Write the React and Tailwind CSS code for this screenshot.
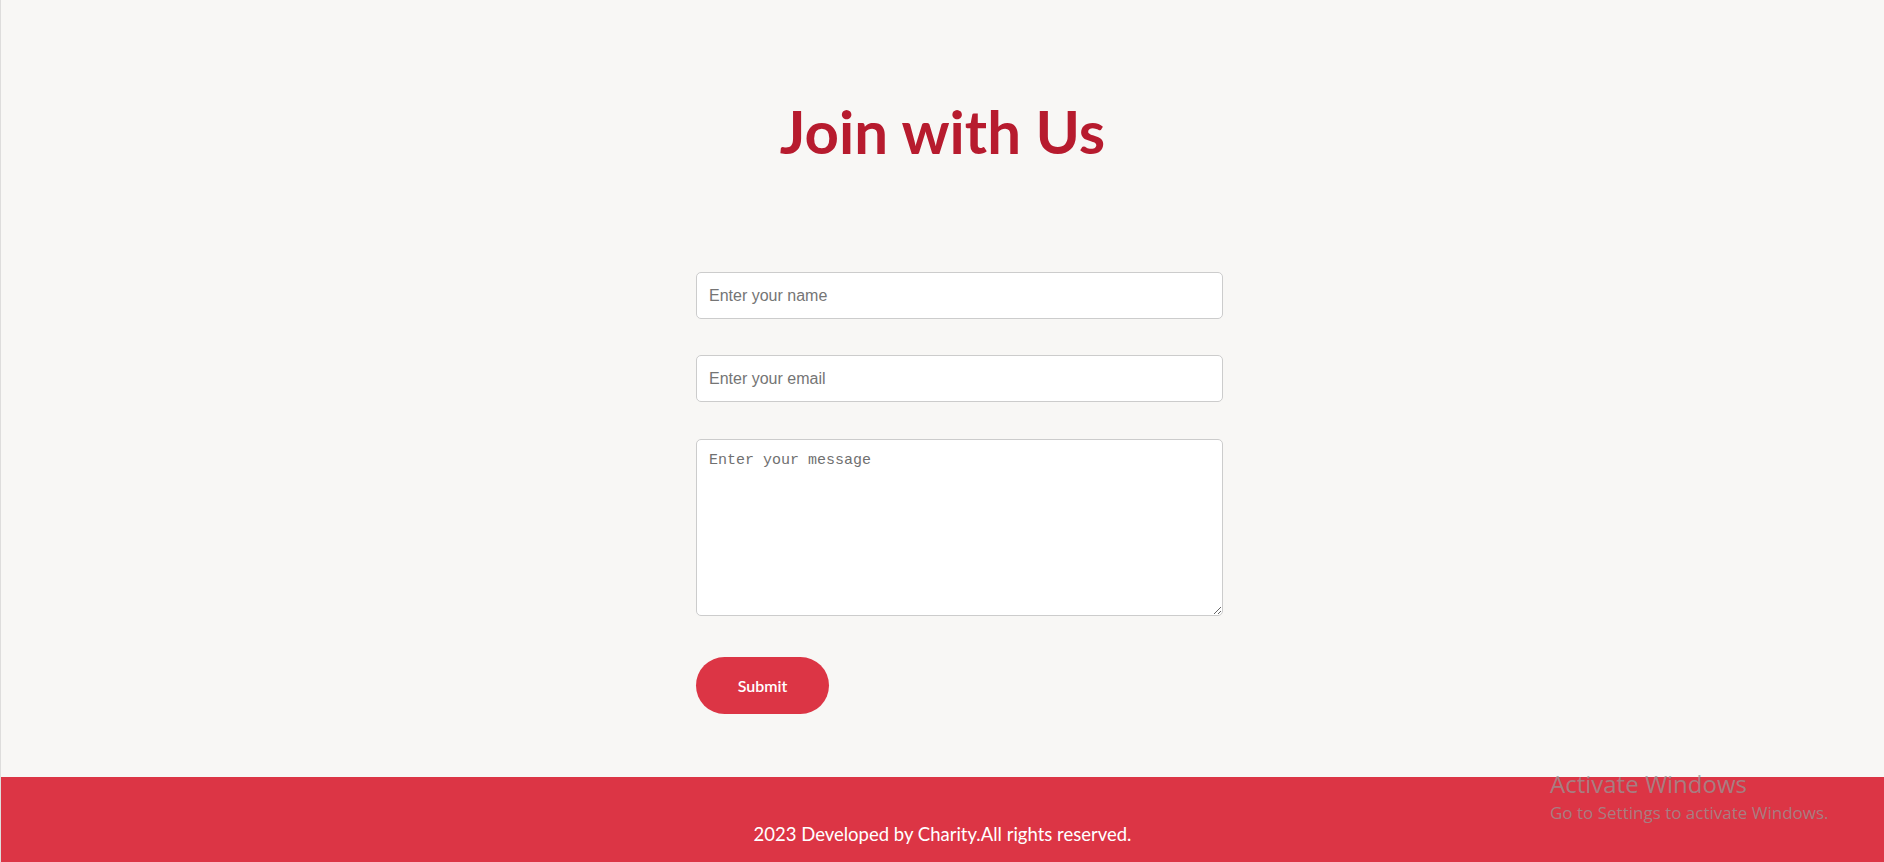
import React from 'react';

const App = () => {
    return (
        <div className="relative min-h-[862px] flex flex-col bg-[#f8f7f5] border-l border-black/10">
            <main className="flex-1 pt-[96px]">
                <h1 className="text-center text-[60px] leading-[70px] font-bold text-[#b71b2e] font-['Lato',sans-serif]">
                    Join with Us
                </h1>

                <form className="ml-[695px] w-[527px] mt-[106px] flex flex-col">
                    <input
                        type="text"
                        placeholder="Enter your name"
                        className="h-[47px] px-3 bg-white border border-[#cccccc] rounded-[5px] text-[16px] font-['Liberation_Sans',Arial,sans-serif] placeholder:text-[#757575] outline-none"
                    />
                    <input
                        type="email"
                        placeholder="Enter your email"
                        className="mt-[36px] h-[47px] px-3 bg-white border border-[#cccccc] rounded-[5px] text-[16px] font-['Liberation_Sans',Arial,sans-serif] placeholder:text-[#757575] outline-none"
                    />
                    <textarea
                        placeholder="Enter your message"
                        className="mt-[37px] h-[177px] px-3 py-[10px] bg-white border border-[#cccccc] rounded-[5px] text-[15px] font-['Liberation_Mono',monospace] placeholder:text-[#707070] outline-none"
                    />
                    <div className="mt-[41px]">
                        <button
                            type="button"
                            className="w-[133px] h-[57px] rounded-full bg-[#dc3545] text-white text-[16px] font-semibold font-['Lato',sans-serif]"
                        >
                            Submit
                        </button>
                    </div>
                </form>
            </main>

            <footer className="h-[85px] bg-[#dc3545] pt-[44px] text-center text-white text-[18.5px] font-['Lato',sans-serif]">
                2023 Developed by Charity.All rights reserved.
            </footer>

            {/* windows watermark */}
            <div className="absolute left-[1549px] top-[770px] text-[rgba(150,150,150,0.75)] font-['Open_Sans',sans-serif]">
                <div className="text-[24px] leading-[28px]">Activate Windows</div>
                <div className="text-[17px] leading-[22px] mt-[4px]">Go to Settings to activate Windows.</div>
            </div>
        </div>
    );
};

export default App;
